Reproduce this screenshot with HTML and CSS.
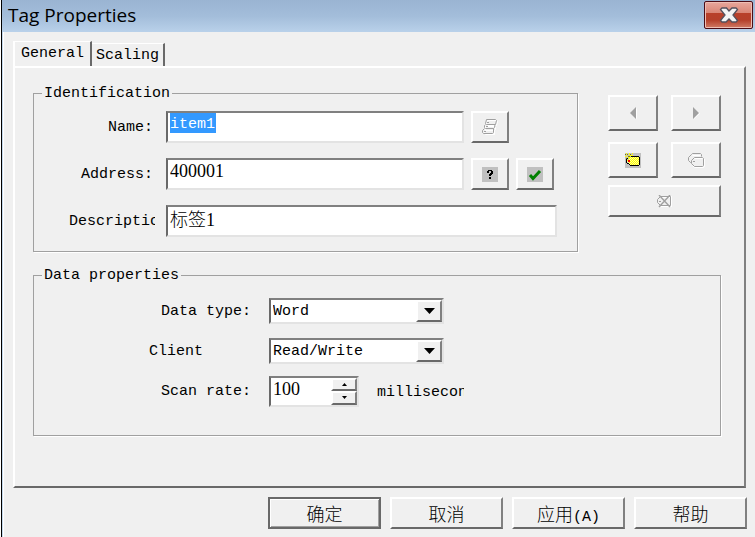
FILE: index.html
```html
<!DOCTYPE html>
<html lang="zh-CN">
<head>
	<meta charset="utf-8">
	<title>Tag Properties</title>
	<link rel="stylesheet" href="styles.css">
</head>
<body>
	<div class="dialog">
		<header class="titlebar">
			<h1>Tag Properties</h1>
			<button type="button" class="close" aria-label="Close">
				<svg width="20" height="16" viewBox="0 0 20 16">
					<path d="M3 1h4.500L10 4l3-3H17l1.500 1.500-4.500 5.500 4.500 5.500L17 15h-4l-3-3-3 3H3L1.500 13.500 6 8 1.500 2.500z" fill="#f4f4f4" stroke="#53515e" stroke-width="1.3"/>
				</svg>
			</button>
		</header>

		<form>
			<nav class="tabs">
				<a href="#general" class="tab active">General</a>
				<a href="#scaling" class="tab">Scaling</a>
			</nav>

			<main class="page" id="general">
				<div class="top">
					<fieldset class="ident">
						<legend>Identification</legend>
						<div class="row one-tool">
							<label for="name">Name:</label>
							<!-- the name is shown selected -->
							<div class="field selected"><input id="name" type="text" value="item1" size="5"></div>
							<button type="button" class="tool" aria-label="Browse tags" disabled>
								<svg width="16" height="16" viewBox="0 0 16 16" fill="none">
									<g stroke="#fff" transform="translate(1 1)"><path d="M4.500 .5h9l1 1-1 4h-9l-1-1zM2.500 6.500h9l1 1v2l-1 1h-9zM1.500 11.500v2l1 1h9v-4"/></g>
									<g stroke="#a0a0a0"><path d="M4.500 .5h9l1 1-1 4h-9l-1-1zM3.500 5.500l-1 1v2l1 1h8l1-1 .5-3M2.500 9.500l-2 2v2l1 1h9l1-1v-4M5 3.500h2M4 7.500h2M2 12.500h2"/></g>
								</svg>
							</button>
						</div>
						<div class="row two-tools">
							<label for="address">Address:</label>
							<input id="address" class="field" type="text" value="400001">
							<button type="button" class="tool" aria-label="Address help">
								<svg width="16" height="15" viewBox="0 0 16 15" shape-rendering="crispEdges">
									<path d="M0 0h16v15H0z" fill="#c0c0c0"/>
									<path d="M6 3h4v1h1v3h-1v1H9v1H7V7h1V6h1V4H7v2H5V4h1zM7 10h2v2H7z" fill="#000"/>
								</svg>
							</button>
							<button type="button" class="tool" aria-label="Check address">
								<svg width="16" height="15" viewBox="0 0 16 15">
									<path d="M0 0h16v15H0z" fill="#c0c0c0"/>
									<path d="M3 8l3 3.500L13 4" fill="none" stroke="#008000" stroke-width="3"/>
								</svg>
							</button>
						</div>
						<div class="row">
							<label for="description" class="clipped">Description:</label>
							<input id="description" class="field" type="text" value="标签1">
						</div>
					</fieldset>

					<div class="side">
						<button type="button" aria-label="Previous" disabled>
							<svg width="7" height="12" viewBox="0 0 7 12"><path d="M7 1v11L1 6.500z" fill="#fff"/><path d="M6 0v12L0 6z" fill="#a0a0a0"/></svg>
						</button>
						<button type="button" aria-label="Next" disabled>
							<svg width="7" height="12" viewBox="0 0 7 12"><path d="M1 1v11l6-5.500z" fill="#fff"/><path d="M0 0v12l6-6z" fill="#a0a0a0"/></svg>
						</button>
						<button type="button" aria-label="New tag">
							<svg width="16" height="15" viewBox="0 0 16 15" shape-rendering="crispEdges">
								<defs>
									<pattern id="dots" width="2" height="2" patternUnits="userSpaceOnUse">
										<path d="M0 0h2v2H0z" fill="#ff0"/><path d="M0 0h1v1H0zM1 1h1v1H1z" fill="#ffff9c"/>
									</pattern>
								</defs>
								<path d="M0 0h16v15H0z" fill="#c0c0c0"/>
								<path d="M5 4h9v8H5l-3-3V7z" fill="url(#dots)"/>
								<path d="M6 3h8v1H6zM14 4h1v8h-1zM5 12h9v1H5zM4 11h1v1H4zM2 10h2v1H2zM1 6h1v4H1zM2 5h1v1H2z" fill="#000"/>
								<path d="M1 0h1v1H1zM4 0h1v2H4zM7 0h1v1H7zM2 2h1v1H2zM5 2h2v1H5zM0 3h2v1H0zM3 4h2v1H3zM7 2h1v1H7z" fill="#ff0"/>
								<path d="M0 1h1v1H0zM2 1h1v1H2zM5 1h1v1H5zM3 3h2v1H3zM1 5h1v1H1z" fill="#808000"/>
								<path d="M3 7h2v2H3z" fill="#f00"/>
							</svg>
						</button>
						<button type="button" aria-label="Duplicate tag" disabled>
							<svg width="17" height="15" viewBox="0 0 17 15" fill="none">
								<path d="M6.500 5.500h8M16.500 6v7.500l-1 1H6.500l-2-2M4.500 2.500h8" stroke="#fff"/>
								<path d="M3.500 9.500h-1l-2-2v-3l3-3 1-1h8l1 1v2M6.500 4.500h8l1 1v7l-1 1H6.500l-3-3v-3zM5 8.500h2" stroke="#a0a0a0"/>
							</svg>
						</button>
						<button type="button" class="wide" aria-label="Delete tag" disabled>
							<svg width="15" height="13" viewBox="0 0 15 13" fill="none">
								<path d="M3.500 2.500h10M14.500 1v11M4 11.500h10" stroke="#fff"/>
								<path d="M3.500 1.500h10v9h-10l-3-3v-3zM2 6.500h2" stroke="#a0a0a0"/>
								<path d="M2 0l11 12M13 0L2 12" stroke="#a0a0a0" stroke-width="1.400"/>
							</svg>
						</button>
					</div>
				</div>

				<fieldset class="data">
					<legend>Data properties</legend>
					<div class="row">
						<label for="type">Data type:</label>
						<div class="combo">
							<select id="type"><option>Word</option></select>
							<span class="arrow"><svg width="11" height="6" viewBox="0 0 11 6"><path d="M0 0h11L5.500 6z"/></svg></span>
						</div>
					</div>
					<div class="row">
						<label for="access" class="short">Client</label>
						<div class="combo">
							<select id="access"><option>Read/Write</option></select>
							<span class="arrow"><svg width="11" height="6" viewBox="0 0 11 6"><path d="M0 0h11L5.500 6z"/></svg></span>
						</div>
					</div>
					<div class="row">
						<label for="rate">Scan rate:</label>
						<div class="spin">
							<input id="rate" type="text" inputmode="numeric" value="100">
							<div class="updown">
								<button type="button" aria-label="Increase"><svg width="5" height="3" viewBox="0 0 5 3"><path d="M0 3h5L2.500 0z"/></svg></button>
								<button type="button" aria-label="Decrease"><svg width="5" height="3" viewBox="0 0 5 3"><path d="M0 0h5L2.500 3z"/></svg></button>
							</div>
						</div>
						<span class="unit">milliseconds</span>
					</div>
				</fieldset>
			</main>

			<footer class="buttons">
				<button type="submit" class="default">确定</button>
				<button type="button">取消</button>
				<button type="button">应用<span class="key">(A)</span></button>
				<button type="button">帮助</button>
			</footer>
		</form>
	</div>
</body>
</html>
```
FILE: styles.css
```css
* {
	box-sizing: border-box;
}
body {
	margin: 0;
	padding-left: 1px;
	background: #fff;
	color: #000;
	font: 15px/18px "Liberation Mono", "Noto Sans CJK SC", monospace;
}
.dialog {
	min-height: 100vh;
	border-left: 1px solid #000;
	background: #f0f0f0;
	box-shadow: inset 1px 0 #c5d9ec, inset 2px 0 #fff;
}

/* title bar */
.titlebar {
	display: flex;
	justify-content: space-between;
	align-items: flex-start;
	height: 32px;
	padding: 1px 2px 0 6px;
	background: linear-gradient(#9ab4d2, #a3bdda 50%, #b9d1ea);
}
h1 {
	margin: 0;
	font: 19px/28px "Open Sans", "Noto Sans", sans-serif;
}
.close {
	display: flex;
	align-items: center;
	justify-content: center;
	width: 49px;
	height: 28px;
	padding: 0;
	border: 1px solid #4c0d16;
	border-radius: 2px;
	background: linear-gradient(#e8a79c, #d98676 42%, #b8402a 43%, #b5402b 70%, #d07b66);
	box-shadow: inset 0 0 0 1px #eebeb4;
}

/* tabs */
.tabs {
	display: flex;
	align-items: flex-end;
	padding: 9px 0 0 11px;
}
.tab {
	padding: 3px 4px 1px;
	border-top: 1px solid #fff;
	border-right: 2px solid #696969;
	color: #000;
	text-decoration: none;
}
.tab.active {
	padding: 3px 6px;
	border-left: 2px solid #fff;
}
.page {
	margin: 0 9px 0 11px;
	padding: 15px 23px 50px 18px;
	border: 2px solid;
	border-color: #fff #808080 #696969 #fff;
}
.top {
	display: flex;
	gap: 30px;
}

/* group boxes */
fieldset {
	min-width: 0;
	margin: 0;
	border: 1px solid #a0a0a0;
	box-shadow: 1px 1px #fff;
}
legend {
	padding: 2px 2px 0;
}
.ident {
	flex: 1;
	padding: 8px 20px 14px 33px;
}
.ident legend {
	margin-left: -25px;
}
.data {
	margin-top: 13px;
	padding: 13px 20px 31px 115px;
}
.data legend {
	margin-left: -107px;
}
.row {
	display: flex;
	align-items: center;
}
label {
	flex: none;
	overflow: hidden;
	padding-top: 2px;
	white-space: nowrap;
	text-align: right;
}
.ident .row {
	gap: 7px;
}
.ident .row + .row {
	margin-top: 15px;
}
.ident label {
	width: 86px;
	margin-right: 6px;
}
.ident .clipped {
	margin: 0 4px 0 2px;
	text-align: left;
}
.one-tool {
	padding-right: 48px;
}
.two-tools {
	padding-right: 3px;
}
.data .row {
	height: 26px;
	gap: 18px;
}
.data .row + .row {
	margin-top: 14px;
}
.data label {
	width: 102px;
}
.data .short {
	text-align: left;
}

/* sunken fields */
.field, .combo, .spin {
	border: 2px solid;
	border-color: #808080 #e3e3e3 #e3e3e3 #696969;
	background: #fff;
}
input, select {
	color: #000;
	font: 300 18px/20px "Liberation Serif", "Noto Sans CJK SC", serif;
}
.field {
	flex: 1;
	min-width: 0;
	height: 32px;
	padding: 0 2px 6px;
}
.selected input {
	display: block;
	width: 46px;
	height: 20px;
	padding: 2px 0 0;
	border: 0;
	background: #3399ff;
	color: #fff;
	font: 15px/18px "Liberation Mono", monospace;
}
.combo {
	position: relative;
	width: 175px;
	height: 26px;
}
select {
	display: block;
	width: 100%;
	height: 22px;
	padding: 2px 24px 0 2px;
	border: 0;
	appearance: none;
	background: #fff;
	font: 15px/20px "Liberation Mono", monospace;
}
.arrow {
	position: absolute;
	top: 0;
	right: 0;
	display: flex;
	align-items: center;
	justify-content: center;
	width: 26px;
	height: 22px;
	pointer-events: none;
}
.spin {
	display: flex;
	width: 90px;
	height: 31px;
}
.spin input {
	flex: 1;
	min-width: 0;
	padding: 0 2px 5px;
	border: 0;
}
.updown {
	display: grid;
	width: 26px;
}
.unit {
	width: 87px;
	overflow: hidden;
	padding-top: 4px;
	white-space: nowrap;
}

/* raised buttons */
.tool, .side button, .buttons button, .arrow, .updown button {
	border: 2px solid;
	border-color: #fff #808080 #696969 #fff;
	background: #f0f0f0;
}
.tool, .side button, .updown button {
	display: flex;
	align-items: center;
	justify-content: center;
	padding: 0;
}
.tool {
	width: 38px;
	height: 32px;
}
.side {
	display: grid;
	grid-template-columns: 50px 50px;
	grid-auto-rows: 36px;
	gap: 11px 13px;
	align-content: start;
	padding-top: 12px;
}
.side .wide {
	grid-column: 1 / 3;
	height: 32px;
	margin-top: -4px;
}
.buttons {
	display: flex;
	justify-content: flex-end;
	gap: 9px;
	padding: 9px 8px 8px;
}
.buttons button {
	width: 113px;
	height: 32px;
	padding: 0;
	color: #000;
	font: 300 18px/26px "Noto Sans CJK SC", sans-serif;
}
.buttons .default {
	border-color: #696969;
	box-shadow: inset 1px 1px #fff, inset -1px -1px #a0a0a0;
}
.key {
	font: 15px "Liberation Mono", monospace;
}
```
